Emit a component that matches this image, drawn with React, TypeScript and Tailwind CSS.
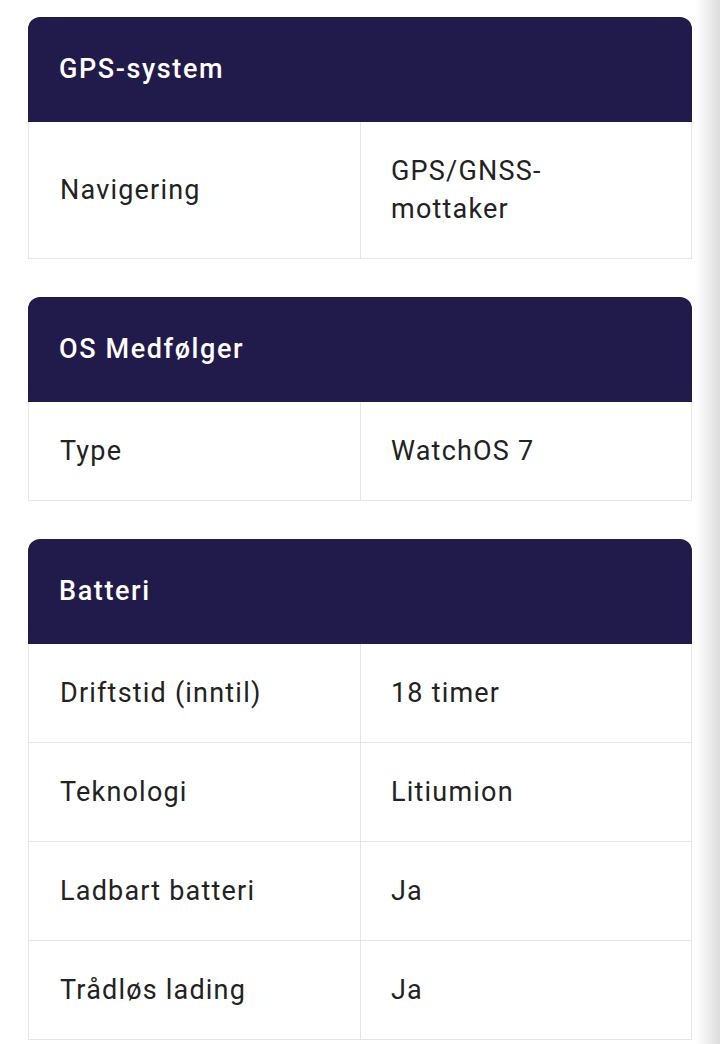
import React from "react";

type Row = [string, string];
type Section = { title: string; rows: Row[] };

const sections: Section[] = [
  { title: "GPS-system", rows: [["Navigering", "GPS/GNSS-mottaker"]] },
  { title: "OS Medfølger", rows: [["Type", "WatchOS 7"]] },
  {
    title: "Batteri",
    rows: [
      ["Driftstid (inntil)", "18 timer"],
      ["Teknologi", "Litiumion"],
      ["Ladbart batteri", "Ja"],
      ["Trådløs lading", "Ja"],
    ],
  },
];

export default function App() {
  return (
    <div
      className="relative min-h-[1044px] w-[720px] overflow-hidden bg-white text-[#222222]"
      style={{ fontFamily: "Roboto, 'Noto Sans', sans-serif" }}
    >
      <div className="ml-[28px] flex w-[664px] flex-col gap-[38px] pt-[17px]">
        {sections.map((s) => (
          <div key={s.title} className="flex flex-col">
            <div className="flex h-[105px] items-center rounded-t-[12px] bg-[#211b4b] px-[31px] text-[27px] font-medium tracking-[1.6px] text-white">
              {s.title}
            </div>
            <div className="flex flex-col border-l border-r border-[#e6e6e6]">
              {s.rows.map(([k, v], i) => (
                <div key={i} className="grid grid-cols-2 border-b border-[#e6e6e6]">
                  <div className="flex items-center px-[31px] py-[30px] text-[27px] leading-[38px] tracking-[1.2px]">
                    {k}
                  </div>
                  <div className="flex items-center border-l border-[#e6e6e6] py-[30px] pl-[30px] pr-[60px] text-[27px] leading-[38px] tracking-[1.2px]">
                    {v}
                  </div>
                </div>
              ))}
            </div>
          </div>
        ))}
      </div>
      <div className="pointer-events-none absolute right-0 top-0 h-full w-[24px] bg-gradient-to-r from-white to-[#dcdcdc]" />
    </div>
  );
}
